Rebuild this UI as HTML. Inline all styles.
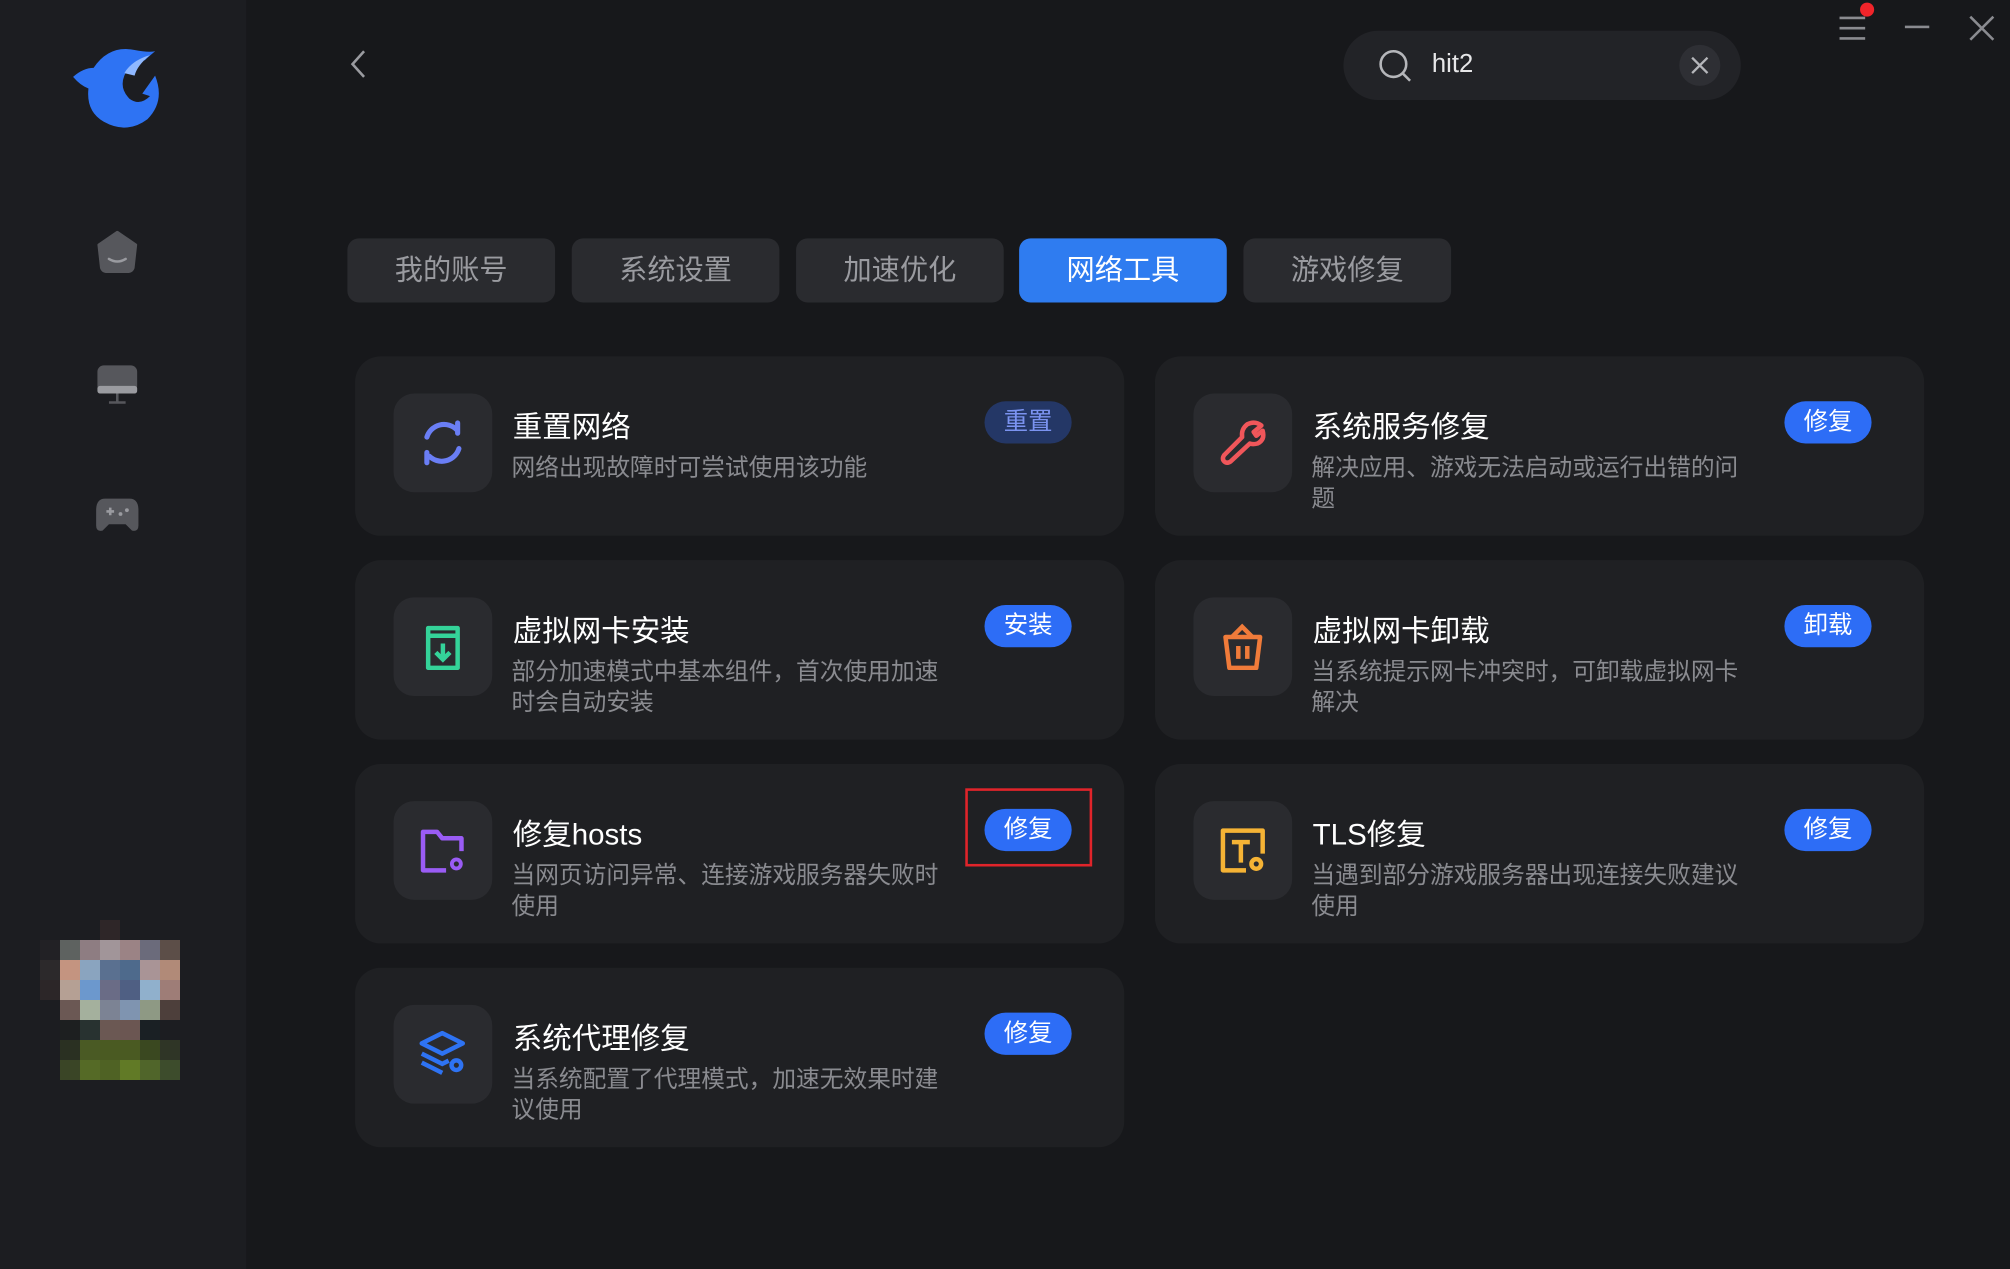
<!DOCTYPE html>
<html><head><meta charset="utf-8"><style>
*{margin:0;padding:0;box-sizing:border-box}
html,body{width:2010px;height:1269px;overflow:hidden;background:#17181b}
#s{position:absolute;left:0;top:0;width:1568px;height:990px;transform:scale(1.2819,1.2818);transform-origin:0 0;font-family:"Liberation Sans","Noto Sans CJK SC",sans-serif;background:#17181b}
.a{position:absolute}
.side{left:0;top:0;width:192px;height:990px;background:#1c1d21}
.tab{position:absolute;top:186px;width:162px;height:50px;border-radius:9px;background:#2a2b2f;color:#9a9ba0;font-size:22px;line-height:50px;text-align:center}
.tab.on{background:#2f7cf0;color:#fff}
.card{position:absolute;width:600px;height:140px;border-radius:20px;background:#1f2023}
.ib{position:absolute;left:30px;top:29px;width:77px;height:77px;border-radius:16px;background:#2a2b2f}
.ib svg{position:absolute;left:18px;top:18px}
.t{position:absolute;left:123px;top:40px;color:#fff;font-size:23px;line-height:30px}
.d{position:absolute;left:122px;top:75px;width:345px;color:#8a8b90;font-size:18.5px;line-height:24px}
.b{position:absolute;left:491px;top:35px;width:68px;height:33px;border-radius:17px;background:#2d6df6;color:#fff;font-size:19px;line-height:33px;text-align:center}
#av{position:absolute;left:40px;top:920px;display:grid;grid-template-columns:repeat(7,20px);grid-auto-rows:20px}
</style></head><body><div id="s">
<div class="a side"></div>
<svg class="a" style="left:55px;top:35px" width="74" height="66" viewBox="0 0 74 66"><path d="M2 25 Q10 18 18 18 Q30 0 50 4 Q60 6 66 5 Q60 10 58 12 Q46 14 42 24 Q38 34 46 42 Q54 48 62 40 L56 38 L66 24 Q74 44 60 58 Q44 70 26 60 Q12 52 14 34 Q8 32 2 25Z" fill="#2e73f3"/><path d="M42 22 Q48 12 62 8 Q52 16 50 24Z" fill="#8fb8ff"/></svg>
<svg class="a" style="left:75px;top:180px" width="33" height="33" viewBox="0 0 33 33"><path d="M16.5 1 L31 11 L29 29 Q28 32 25 32 L8 32 Q5 32 4 29 L2 11Z" fill="#56575c" stroke="#56575c" stroke-linejoin="round" stroke-width="2"/><path d="M10 22 Q16.5 26 23 22" stroke="#9a9ba0" stroke-width="2" fill="none" stroke-linecap="round"/></svg>
<svg class="a" style="left:75px;top:284px" width="33" height="33" viewBox="0 0 33 33"><rect x="1" y="1" width="31" height="21" rx="5" fill="#56575c"/><rect x="1" y="17" width="31" height="6" rx="2" fill="#9a9ba0"/><path d="M16.5 23v6M10 30h13" stroke="#56575c" stroke-width="2"/></svg>
<svg class="a" style="left:74px;top:388px" width="35" height="28" viewBox="0 0 35 28"><path d="M8 1 H27 Q34 1 34 10 L34 22 Q34 27 29 26 L24 21 H11 L6 26 Q1 27 1 22 L1 10 Q1 1 8 1Z" fill="#56575c"/><path d="M9 11h6M12 8v6" stroke="#9a9ba0" stroke-width="2"/><circle cx="20" cy="13" r="1.5" fill="#9a9ba0"/><circle cx="25" cy="10" r="1.5" fill="#9a9ba0"/></svg>
<svg class="a" style="left:270px;top:38px" width="20" height="26"><path d="M14 2 L5 12 L14 22" stroke="#9a9ba0" stroke-width="2" fill="none"/></svg>
<div class="a" style="left:1048px;top:24px;width:310px;height:54px;border-radius:27px;background:#222327"></div>
<svg class="a" style="left:1074px;top:37px" width="30" height="30"><circle cx="13" cy="13" r="10" stroke="#b5b6ba" stroke-width="2" fill="none"/><path d="M20 20l6 6" stroke="#b5b6ba" stroke-width="2"/></svg>
<div class="a" style="left:1117px;top:37px;color:#e6e6e8;font-size:20px;line-height:26px">hit2</div>
<div class="a" style="left:1310px;top:35px;width:32px;height:32px;border-radius:16px;background:#2e2f34"></div>
<svg class="a" style="left:1318px;top:43px" width="16" height="16"><path d="M2 2l12 12M14 2L2 14" stroke="#b5b6ba" stroke-width="1.8"/></svg>
<svg class="a" style="left:1433px;top:10px" width="26" height="24"><path d="M2 4h20M2 12h20M2 20h20" stroke="#8a8b90" stroke-width="2"/></svg>
<div class="a" style="left:1451px;top:2px;width:11px;height:11px;border-radius:6px;background:#f0242a"></div>
<div class="a" style="left:1486px;top:20px;width:19px;height:2px;background:#8a8b90"></div>
<svg class="a" style="left:1535px;top:11px" width="22" height="22"><path d="M2 2l18 18M20 2L2 20" stroke="#8a8b90" stroke-width="2"/></svg>
<div class="tab" style="left:271px">我的账号</div>
<div class="tab" style="left:446px">系统设置</div>
<div class="tab" style="left:621px">加速优化</div>
<div class="tab on" style="left:795px">网络工具</div>
<div class="tab" style="left:970px">游戏修复</div>

<div class="card" style="left:277px;top:278px"><div class="ib"><svg width="41" height="41" viewBox="0 0 41 41"><path d="M31 10 A14 14 0 0 0 8 16 M10 31 A14 14 0 0 0 33 25" stroke="#6a7ef5" stroke-width="4" fill="none" stroke-linecap="round"/><path d="M32 5v8M8 36v-8" stroke="#6a7ef5" stroke-width="4" stroke-linecap="round"/></svg></div><div class="t">重置网络</div><div class="d">网络出现故障时可尝试使用该功能</div><div class="b" style="background:#243766;color:#7b93f0">重置</div></div>
<div class="card" style="left:901px;top:278px"><div class="ib"><svg width="41" height="41" viewBox="0 0 41 41"><path d="M24 6 Q30 3 35 7 L29 12 L31 15 L36 11 Q38 18 32 21 Q28 22 26 21 L11 35 Q8 37 6 35 Q4 33 6 30 L20 16 Q19 10 24 6Z" stroke="#f0565a" stroke-width="3.5" fill="none" stroke-linejoin="round"/></svg></div><div class="t">系统服务修复</div><div class="d">解决应用、游戏无法启动或运行出错的问题</div><div class="b">修复</div></div>
<div class="card" style="left:277px;top:437px"><div class="ib"><svg width="41" height="41" viewBox="0 0 41 41"><path d="M9 6h23v31H9z" stroke="#34d399" stroke-width="3.5" fill="none" stroke-linejoin="round"/><path d="M9 12h23" stroke="#34d399" stroke-width="3.5"/><path d="M20.5 18v12M15 25l5.5 5.5L26 25" stroke="#34d399" stroke-width="3.5" fill="none"/></svg></div><div class="t">虚拟网卡安装</div><div class="d">部分加速模式中基本组件，首次使用加速时会自动安装</div><div class="b">安装</div></div>
<div class="card" style="left:901px;top:437px"><div class="ib"><svg width="41" height="41" viewBox="0 0 41 41"><path d="M7 13h27l-3 24H10z" stroke="#f07b3a" stroke-width="3.5" fill="none" stroke-linejoin="round"/><path d="M12 13l8-8 8 8" stroke="#f07b3a" stroke-width="3.5" fill="none"/><path d="M17 20v10M24 20v10" stroke="#f07b3a" stroke-width="3.5"/></svg></div><div class="t">虚拟网卡卸载</div><div class="d">当系统提示网卡冲突时，可卸载虚拟网卡解决</div><div class="b">卸载</div></div>
<div class="card" style="left:277px;top:596px"><div class="ib"><svg width="41" height="41" viewBox="0 0 41 41"><path d="M23 36H5V6h11l4 5h15v10" stroke="#9a5cf5" stroke-width="3.5" fill="none" stroke-linejoin="round"/><circle cx="31" cy="31" r="5" fill="#9a5cf5"/><circle cx="31" cy="31" r="2" fill="#2a2b2f"/></svg></div><div class="t">修复hosts</div><div class="d">当网页访问异常、连接游戏服务器失败时使用</div><div class="b">修复</div></div>
<div class="a" style="left:753px;top:615px;width:99px;height:61px;border:2px solid #e0242a"></div>
<div class="card" style="left:901px;top:596px"><div class="ib"><svg width="41" height="41" viewBox="0 0 41 41"><path d="M23 36H5V5h31v18" stroke="#f5b335" stroke-width="3.5" fill="none" stroke-linejoin="round"/><path d="M12 14h14M19 14v16" stroke="#f5b335" stroke-width="3.5"/><circle cx="31" cy="31" r="5.5" fill="#f5b335"/><circle cx="31" cy="31" r="2" fill="#2a2b2f"/></svg></div><div class="t">TLS修复</div><div class="d">当遇到部分游戏服务器出现连接失败建议使用</div><div class="b">修复</div></div>
<div class="card" style="left:277px;top:755px"><div class="ib"><svg width="41" height="41" viewBox="0 0 41 41"><path d="M20 4L36 12 20 20 4 12z" stroke="#2e73f3" stroke-width="3.5" fill="none" stroke-linejoin="round"/><path d="M4 20l16 8 5-2.5M4 27l16 8" stroke="#2e73f3" stroke-width="3.5" fill="none"/><circle cx="31" cy="29" r="5.5" fill="#2e73f3"/><circle cx="31" cy="29" r="2" fill="#2a2b2f"/></svg></div><div class="t">系统代理修复</div><div class="d">当系统配置了代理模式，加速无效果时建议使用</div><div class="b">修复</div></div>
</div>
<div id="av">
<i></i><i></i><i></i><i style="background:#2e2628"></i><i></i><i></i><i></i>
<i style="background:#222125"></i><i style="background:#5e6260"></i><i style="background:#8e7d82"></i><i style="background:#a19599"></i><i style="background:#9b8385"></i><i style="background:#6b6b7b"></i><i style="background:#5c4e48"></i>
<i style="background:#2c292b"></i><i style="background:#c49480"></i><i style="background:#8aa4bf"></i><i style="background:#5a7090"></i><i style="background:#4e6a8c"></i><i style="background:#a99496"></i><i style="background:#b18a78"></i>
<i style="background:#2c2628"></i><i style="background:#b5a094"></i><i style="background:#6c98cd"></i><i style="background:#6a6c86"></i><i style="background:#4f5f83"></i><i style="background:#90b0cc"></i><i style="background:#9e7d77"></i>
<i></i><i style="background:#6b5854"></i><i style="background:#a4b09d"></i><i style="background:#7c8394"></i><i style="background:#7f94b0"></i><i style="background:#8e9984"></i><i style="background:#4d3f3b"></i>
<i></i><i style="background:#1d1f20"></i><i style="background:#283230"></i><i style="background:#6b5853"></i><i style="background:#6b5652"></i><i style="background:#1a2024"></i><i></i>
<i></i><i style="background:#2a3022"></i><i style="background:#4a5a24"></i><i style="background:#4a5a22"></i><i style="background:#4a5a22"></i><i style="background:#3a4820"></i><i style="background:#2f3526"></i>
<i></i><i style="background:#3a4526"></i><i style="background:#556a26"></i><i style="background:#4f6224"></i><i style="background:#617a26"></i><i style="background:#50652a"></i><i style="background:#3d4c2c"></i>
</div>
</body></html>
